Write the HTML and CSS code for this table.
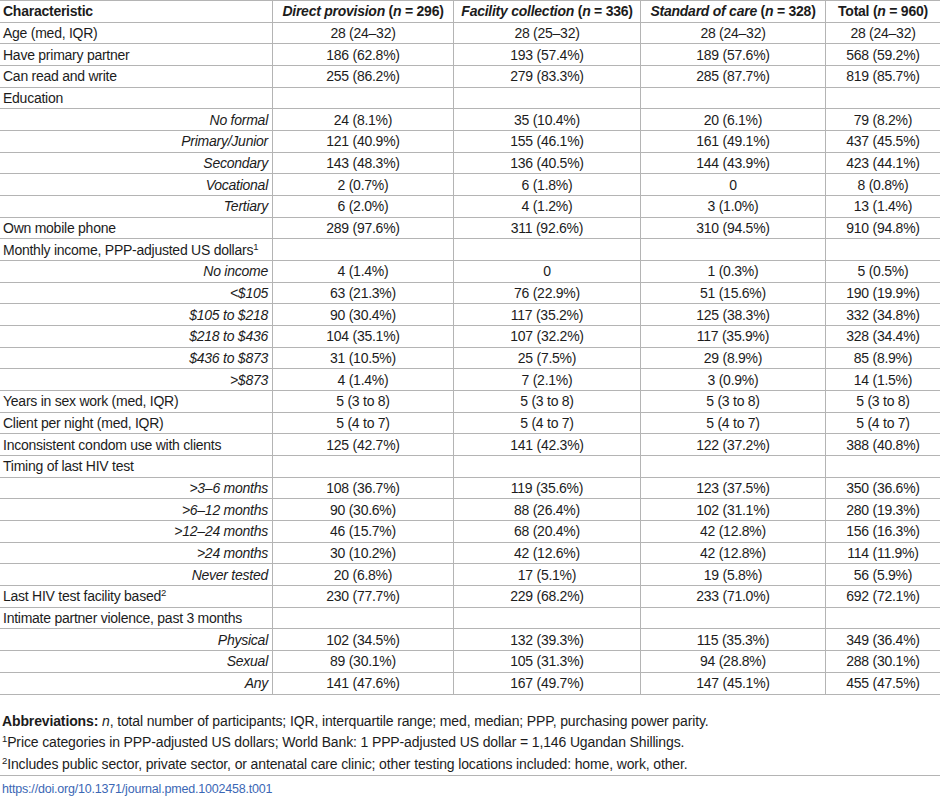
FILE: index.html
```html
<!DOCTYPE html>
<html lang="en">
<head>
    <meta charset="UTF-8">
    <title>Table 1</title>
    <link rel="stylesheet" href="styles.css">
</head>
<body>
    <table class="data-table">
        <thead>
            <tr>
                <th class="col-label">Characteristic</th>
                <th><i>Direct provision</i> (<i>n</i> = 296)</th>
                <th><i>Facility collection</i> (<i>n</i> = 336)</th>
                <th><i>Standard of care</i> (<i>n</i> = 328)</th>
                <th>Total (<i>n</i> = 960)</th>
            </tr>
        </thead>
        <tbody>
            <tr><td>Age (med, IQR)</td><td>28 (24–32)</td><td>28 (25–32)</td><td>28 (24–32)</td><td>28 (24–32)</td></tr>
            <tr><td>Have primary partner</td><td>186 (62.8%)</td><td>193 (57.4%)</td><td>189 (57.6%)</td><td>568 (59.2%)</td></tr>
            <tr><td>Can read and write</td><td>255 (86.2%)</td><td>279 (83.3%)</td><td>285 (87.7%)</td><td>819 (85.7%)</td></tr>
            <tr><td>Education</td><td></td><td></td><td></td><td></td></tr>
            <tr><td class="sub">No formal</td><td>24 (8.1%)</td><td>35 (10.4%)</td><td>20 (6.1%)</td><td>79 (8.2%)</td></tr>
            <tr><td class="sub">Primary/Junior</td><td>121 (40.9%)</td><td>155 (46.1%)</td><td>161 (49.1%)</td><td>437 (45.5%)</td></tr>
            <tr><td class="sub">Secondary</td><td>143 (48.3%)</td><td>136 (40.5%)</td><td>144 (43.9%)</td><td>423 (44.1%)</td></tr>
            <tr><td class="sub">Vocational</td><td>2 (0.7%)</td><td>6 (1.8%)</td><td>0</td><td>8 (0.8%)</td></tr>
            <tr><td class="sub">Tertiary</td><td>6 (2.0%)</td><td>4 (1.2%)</td><td>3 (1.0%)</td><td>13 (1.4%)</td></tr>
            <tr><td>Own mobile phone</td><td>289 (97.6%)</td><td>311 (92.6%)</td><td>310 (94.5%)</td><td>910 (94.8%)</td></tr>
            <tr><td>Monthly income, PPP-adjusted US dollars<sup>1</sup></td><td></td><td></td><td></td><td></td></tr>
            <tr><td class="sub">No income</td><td>4 (1.4%)</td><td>0</td><td>1 (0.3%)</td><td>5 (0.5%)</td></tr>
            <tr><td class="sub">&lt;$105</td><td>63 (21.3%)</td><td>76 (22.9%)</td><td>51 (15.6%)</td><td>190 (19.9%)</td></tr>
            <tr><td class="sub">$105 to $218</td><td>90 (30.4%)</td><td>117 (35.2%)</td><td>125 (38.3%)</td><td>332 (34.8%)</td></tr>
            <tr><td class="sub">$218 to $436</td><td>104 (35.1%)</td><td>107 (32.2%)</td><td>117 (35.9%)</td><td>328 (34.4%)</td></tr>
            <tr><td class="sub">$436 to $873</td><td>31 (10.5%)</td><td>25 (7.5%)</td><td>29 (8.9%)</td><td>85 (8.9%)</td></tr>
            <tr><td class="sub">&gt;$873</td><td>4 (1.4%)</td><td>7 (2.1%)</td><td>3 (0.9%)</td><td>14 (1.5%)</td></tr>
            <tr><td>Years in sex work (med, IQR)</td><td>5 (3 to 8)</td><td>5 (3 to 8)</td><td>5 (3 to 8)</td><td>5 (3 to 8)</td></tr>
            <tr><td>Client per night (med, IQR)</td><td>5 (4 to 7)</td><td>5 (4 to 7)</td><td>5 (4 to 7)</td><td>5 (4 to 7)</td></tr>
            <tr><td>Inconsistent condom use with clients</td><td>125 (42.7%)</td><td>141 (42.3%)</td><td>122 (37.2%)</td><td>388 (40.8%)</td></tr>
            <tr><td>Timing of last HIV test</td><td></td><td></td><td></td><td></td></tr>
            <tr><td class="sub">&gt;3–6 months</td><td>108 (36.7%)</td><td>119 (35.6%)</td><td>123 (37.5%)</td><td>350 (36.6%)</td></tr>
            <tr><td class="sub">&gt;6–12 months</td><td>90 (30.6%)</td><td>88 (26.4%)</td><td>102 (31.1%)</td><td>280 (19.3%)</td></tr>
            <tr><td class="sub">&gt;12–24 months</td><td>46 (15.7%)</td><td>68 (20.4%)</td><td>42 (12.8%)</td><td>156 (16.3%)</td></tr>
            <tr><td class="sub">&gt;24 months</td><td>30 (10.2%)</td><td>42 (12.6%)</td><td>42 (12.8%)</td><td>114 (11.9%)</td></tr>
            <tr><td class="sub">Never tested</td><td>20 (6.8%)</td><td>17 (5.1%)</td><td>19 (5.8%)</td><td>56 (5.9%)</td></tr>
            <tr><td>Last HIV test facility based<sup>2</sup></td><td>230 (77.7%)</td><td>229 (68.2%)</td><td>233 (71.0%)</td><td>692 (72.1%)</td></tr>
            <tr><td>Intimate partner violence, past 3 months</td><td></td><td></td><td></td><td></td></tr>
            <tr><td class="sub">Physical</td><td>102 (34.5%)</td><td>132 (39.3%)</td><td>115 (35.3%)</td><td>349 (36.4%)</td></tr>
            <tr><td class="sub">Sexual</td><td>89 (30.1%)</td><td>105 (31.3%)</td><td>94 (28.8%)</td><td>288 (30.1%)</td></tr>
            <tr><td class="sub">Any</td><td>141 (47.6%)</td><td>167 (49.7%)</td><td>147 (45.1%)</td><td>455 (47.5%)</td></tr>
        </tbody>
    </table>

    <div class="table-notes">
        <p><b>Abbreviations:</b> <i>n</i>, total number of participants; IQR, interquartile range; med, median; PPP, purchasing power parity.</p>
        <p><sup>1</sup>Price categories in PPP-adjusted US dollars; World Bank: 1 PPP-adjusted US dollar = 1,146 Ugandan Shillings.</p>
        <p><sup>2</sup>Includes public sector, private sector, or antenatal care clinic; other testing locations included: home, work, other.</p>
    </div>
    <div class="doi-line">
        <a href="#">https://doi.org/10.1371/journal.pmed.1002458.t001</a>
    </div>
</body>
</html>
```

FILE: styles.css
```css
body{
    margin: 0;
    font-family: "Liberation Sans", Arial, sans-serif;
    color: #1c1c1c;
    background: #fff;
}
.data-table{
    width: 940px;
    border-collapse: collapse;
    table-layout: fixed;
    font-size: 14px;
    letter-spacing: -0.25px;
}
.data-table th,
.data-table td{
    height: 20.68px;
    padding: 0 3px;
    border-top: 1px solid #b4b4b4;
    border-bottom: 1px solid #b4b4b4;
    border-left: 1px solid #b4b4b4;
    text-align: center;
    white-space: nowrap;
    line-height: 16px;
}
.data-table th:first-child,
.data-table td:first-child{
    border-left: none;
    text-align: left;
    width: 266px;
}
.data-table th:nth-child(2){ width: 174px; }
.data-table th:nth-child(3){ width: 180px; }
.data-table th:nth-child(4){ width: 178px; }
.data-table th{
    font-weight: 700;
}
.data-table td.sub{
    text-align: right;
    font-style: italic;
    padding-right: 4px;
}
sup{
    font-size: 9.5px;
    line-height: 0;
    vertical-align: 5px;
}
.table-notes{
    padding: 16px 0 0 2px;
    font-size: 14px;
    letter-spacing: -0.13px;
}
.table-notes p{
    margin: 0;
    height: 21.5px;
    line-height: 21.5px;
}
.doi-line{
    border-top: 1px solid #b4b4b4;
    padding: 6px 0 0 2px;
    font-size: 12.5px;
    line-height: 15px;
    letter-spacing: -0.2px;
}
.doi-line a{
    color: #3b67b5;
    text-decoration: none;
}
```
